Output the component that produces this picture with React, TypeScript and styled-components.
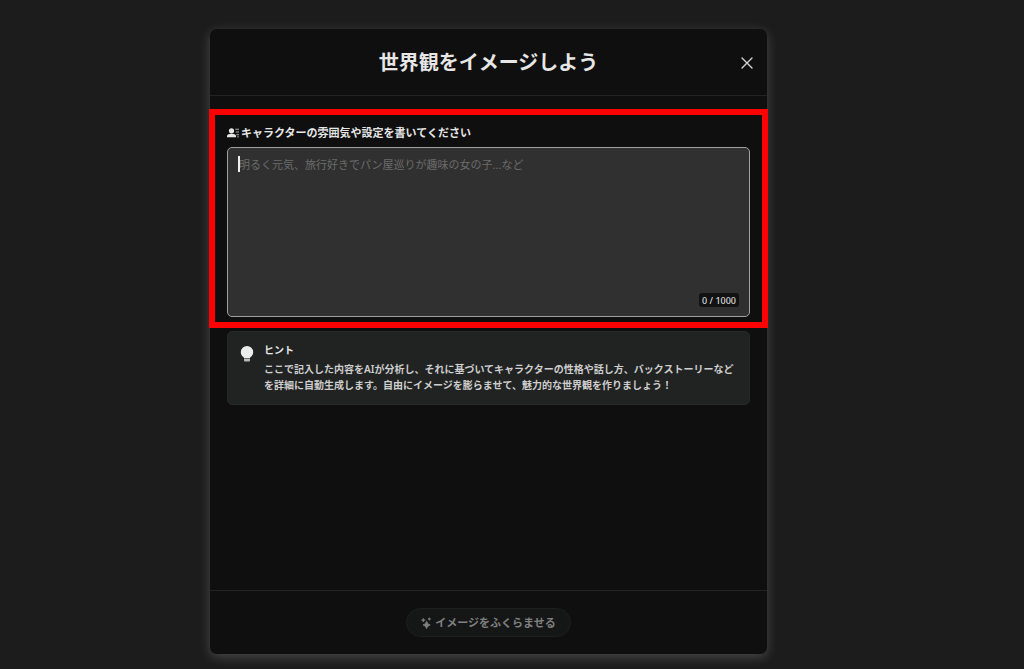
import React, { useState } from "react";
import styled, { createGlobalStyle } from "styled-components";

const GlobalStyle = createGlobalStyle`
  *, *::before, *::after { box-sizing: border-box; }
  body {
    margin: 0;
    background: #1c1c1c;
    color: #e6e6e6;
    font-family: "Noto Sans", "Noto Sans CJK JP", sans-serif;
  }
  button, textarea { font-family: inherit; }
`;

const Backdrop = styled.div`
  display: flex;
  justify-content: center;
  min-height: 100vh;
  padding: 29px 47px 15px 0;
`;

const Dialog = styled.main`
  display: flex;
  flex-direction: column;
  width: 100%;
  max-width: 557px;
  border-radius: 7px;
  background: #0f0f0f;
  box-shadow: 0 3px 12px rgba(255, 255, 255, 0.2);
`;

const Header = styled.header`
  display: grid;
  grid-template-columns: 40px 1fr 40px;
  align-items: center;
  height: 67px;
  padding-top: 2px;
  border-bottom: 1px solid #222424;
`;

const Title = styled.h1`
  grid-column: 2;
  margin: 0;
  font-size: 20px;
  line-height: 28px;
  font-weight: 700;
  text-align: center;
`;

const CloseButton = styled.button`
  display: grid;
  place-items: center;
  width: 40px;
  height: 40px;
  padding: 0;
  border: 0;
  background: none;
  color: #d4d4d4;
  cursor: pointer;
`;

const Body = styled.div`
  flex: 1;
  padding-top: 13px;
`;

const PromptSection = styled.section`
  margin: 0 -1px;
  padding: 8px 12px 5px;
  border: 6px solid #ff0000;
`;

const PromptLabel = styled.label`
  display: flex;
  align-items: center;
  gap: 2px;
  margin-bottom: 4px;
  font-size: 11px;
  line-height: 20px;
  font-weight: 700;
`;

const Field = styled.div`
  position: relative;
  display: flex;
`;

const PromptInput = styled.textarea`
  width: 100%;
  height: 170px;
  padding: 8px 11px;
  border: 1px solid #a0a0a0;
  border-radius: 5px;
  outline: 0;
  background: #303030;
  color: #e6e6e6;
  font-size: 11px;
  line-height: 18px;
  resize: none;

  &::placeholder {
    color: #6c6c6c;
    opacity: 1;
  }
`;

const Caret = styled.span`
  position: absolute;
  top: 9px;
  left: 11px;
  width: 2px;
  height: 16px;
  background: #f0f0f0;
`;

const Counter = styled.span`
  position: absolute;
  right: 11px;
  bottom: 10px;
  padding: 1px 3px 0;
  border-radius: 3px;
  background: #121212;
  color: #dcdcdc;
  font-size: 9px;
  line-height: 13px;
  font-weight: 500;
`;

const Hint = styled.aside`
  display: flex;
  gap: 10px;
  margin: 3px 17px 0;
  padding: 9px 12px 11px;
  border: 1px solid #272929;
  border-radius: 5px;
  background: #212323;
`;

const HintIcon = styled.span`
  display: flex;
  padding-top: 4px;
`;

const HintTitle = styled.h2`
  margin: 0 0 2px;
  font-size: 10px;
  line-height: 18px;
  font-weight: 700;
`;

const HintText = styled.p`
  margin: 0;
  color: #cecece;
  font-size: 10px;
  line-height: 16px;
  font-weight: 600;
`;

const Footer = styled.footer`
  display: flex;
  justify-content: center;
  padding: 17px;
  border-top: 1px solid #222424;
`;

const GenerateButton = styled.button`
  display: flex;
  align-items: center;
  gap: 3px;
  height: 29px;
  padding: 0 14px;
  border: 1px solid #1d1f1f;
  border-radius: 15px;
  background: #151616;
  color: #808080;
  font-size: 11px;
  line-height: 18px;
  font-weight: 600;
`;

const CloseIcon = () => (
  <svg width="14" height="14" viewBox="0 0 14 14" fill="none" stroke="currentColor" strokeWidth="1.4" strokeLinecap="round" aria-hidden="true">
    <path d="M2 2l10 10M12 2L2 12" />
  </svg>
);

const PersonIcon = () => (
  <svg width="12" height="12" viewBox="0 0 12 12" fill="currentColor" aria-hidden="true">
    <circle cx="4.5" cy="3.8" r="2.6" />
    <path d="M0 10.2V9.1C0 7.5 2.2 6.8 4.5 6.8S9 7.5 9 9.1v1.1z" />
    <path opacity=".75" d="M8.3 1.8H12v1H8.3zM8.8 4.5H12v1H8.8zM9.3 7.2H12v1H9.3zM10 9.4h2v.8h-2z" />
  </svg>
);

const BulbIcon = () => (
  <svg width="14" height="18" viewBox="0 0 14 18" fill="#ececec" aria-hidden="true">
    <path d="M7 1a6.200 6.200 0 0 0-6.200 6.200c0 2.100 1.100 3.700 2.600 4.800.4.300.6.600.6 1.100h6c0-.5.2-.8.6-1.100 1.500-1.100 2.600-2.700 2.600-4.800A6.200 6.200 0 0 0 7 1z" />
    <path opacity=".75" d="M4 13.500h6v1.700c0 .8-.5 1.300-1.300 1.300H5.300c-.8 0-1.300-.5-1.300-1.300z" />
  </svg>
);

const SparkleIcon = () => (
  <svg width="11" height="12" viewBox="0 0 11 12" fill="currentColor" stroke="currentColor" aria-hidden="true">
    <path d="M5.600 4.200Q6.200 7.200 9.200 7.900Q6.200 8.600 5.600 11.600Q5 8.600 2 7.900Q5 7.200 5.600 4.200z" strokeWidth=".8" />
    <path d="M2.300 1.200Q2.700 2.700 4.200 3.100Q2.700 3.500 2.300 5Q1.900 3.500.4 3.100Q1.900 2.700 2.300 1.200z" strokeWidth=".5" />
    <path d="M8.300.6Q8.600 1.700 9.700 2Q8.600 2.300 8.300 3.400Q8 2.300 6.900 2Q8 1.700 8.300.6z" strokeWidth=".5" />
  </svg>
);

export default function App() {
  const [text, setText] = useState("");

  return (
    <>
      <GlobalStyle />
      <Backdrop>
        <Dialog>
          <Header>
            <Title>世界観をイメージしよう</Title>
            <CloseButton type="button" aria-label="閉じる">
              <CloseIcon />
            </CloseButton>
          </Header>
          <Body>
            <PromptSection>
              <PromptLabel htmlFor="prompt">
                <PersonIcon />
                キャラクターの雰囲気や設定を書いてください
              </PromptLabel>
              <Field>
                <PromptInput
                  id="prompt"
                  maxLength={1000}
                  placeholder="明るく元気、旅行好きでパン屋巡りが趣味の女の子...など"
                  value={text}
                  onChange={(e) => setText(e.target.value)}
                />
                {text === "" && <Caret />}
                <Counter>{text.length} / 1000</Counter>
              </Field>
            </PromptSection>
            <Hint>
              <HintIcon>
                <BulbIcon />
              </HintIcon>
              <div>
                <HintTitle>ヒント</HintTitle>
                <HintText>
                  ここで記入した内容をAIが分析し、それに基づいてキャラクターの性格や話し方、バックストーリーなどを詳細に自動生成します。自由にイメージを膨らませて、魅力的な世界観を作りましょう！
                </HintText>
              </div>
            </Hint>
          </Body>
          <Footer>
            <GenerateButton type="button">
              <SparkleIcon />
              イメージをふくらませる
            </GenerateButton>
          </Footer>
        </Dialog>
      </Backdrop>
    </>
  );
}
